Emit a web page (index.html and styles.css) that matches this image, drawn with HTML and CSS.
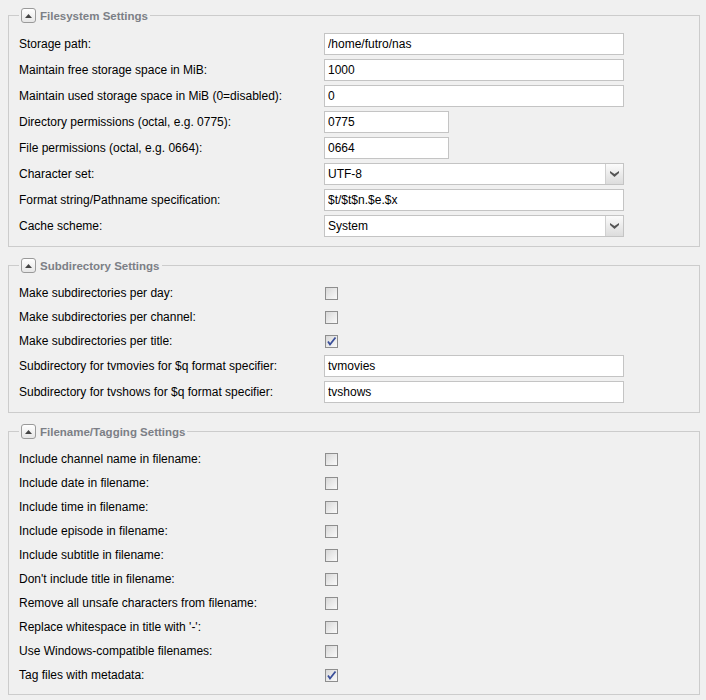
FILE: index.html
```html
<!DOCTYPE html>
<html lang="en">

<head>
  <meta charset="UTF-8">
  <meta name="viewport" content="width=device-width, initial-scale=1.0">
  <title>Recording settings</title>
  <link rel="stylesheet" href="styles.css">
</head>

<body>
  <fieldset class="group">
    <legend><span class="toggle"><svg width="7" height="4" viewBox="0 0 7 4"><path d="M0 4 L3.5 0 L7 4 Z" fill="#444"/></svg></span>Filesystem Settings</legend>
    <div class="row"><label>Storage path:</label><input class="text wide" value="/home/futro/nas"></div>
    <div class="row"><label>Maintain free storage space in MiB:</label><input class="text wide" value="1000"></div>
    <div class="row"><label>Maintain used storage space in MiB (0=disabled):</label><input class="text wide" value="0"></div>
    <div class="row"><label>Directory permissions (octal, e.g. 0775):</label><input class="text short" value="0775"></div>
    <div class="row"><label>File permissions (octal, e.g. 0664):</label><input class="text short" value="0664"></div>
    <div class="row"><label>Character set:</label>
      <div class="combo"><span class="value">UTF-8</span><span class="trigger"><svg width="9" height="6" viewBox="0 0 9 6"><path d="M0 0 L4.5 3 L9 0 L9 2 L4.5 6 L0 2 Z" fill="#555"/></svg></span></div>
    </div>
    <div class="row"><label>Format string/Pathname specification:</label><input class="text wide" value="$t/$t$n.$e.$x"></div>
    <div class="row"><label>Cache scheme:</label>
      <div class="combo"><span class="value">System</span><span class="trigger"><svg width="9" height="6" viewBox="0 0 9 6"><path d="M0 0 L4.5 3 L9 0 L9 2 L4.5 6 L0 2 Z" fill="#555"/></svg></span></div>
    </div>
  </fieldset>

  <fieldset class="group">
    <legend><span class="toggle"><svg width="7" height="4" viewBox="0 0 7 4"><path d="M0 4 L3.5 0 L7 4 Z" fill="#444"/></svg></span>Subdirectory Settings</legend>
    <div class="row check-row"><label>Make subdirectories per day:</label><span class="check"></span></div>
    <div class="row check-row"><label>Make subdirectories per channel:</label><span class="check"></span></div>
    <div class="row check-row"><label>Make subdirectories per title:</label><span class="check checked"><svg width="11" height="11" viewBox="0 0 11 11"><path d="M2 5.5 L4 8.5 L9.5 1.5" fill="none" stroke="#3a4f9a" stroke-width="1.8"/></svg></span></div>
    <div class="row"><label>Subdirectory for tvmovies for $q format specifier:</label><input class="text wide" value="tvmovies"></div>
    <div class="row"><label>Subdirectory for tvshows for $q format specifier:</label><input class="text wide" value="tvshows"></div>
  </fieldset>

  <fieldset class="group">
    <legend><span class="toggle"><svg width="7" height="4" viewBox="0 0 7 4"><path d="M0 4 L3.5 0 L7 4 Z" fill="#444"/></svg></span>Filename/Tagging Settings</legend>
    <div class="row check-row"><label>Include channel name in filename:</label><span class="check"></span></div>
    <div class="row check-row"><label>Include date in filename:</label><span class="check"></span></div>
    <div class="row check-row"><label>Include time in filename:</label><span class="check"></span></div>
    <div class="row check-row"><label>Include episode in filename:</label><span class="check"></span></div>
    <div class="row check-row"><label>Include subtitle in filename:</label><span class="check"></span></div>
    <div class="row check-row"><label>Don't include title in filename:</label><span class="check"></span></div>
    <div class="row check-row"><label>Remove all unsafe characters from filename:</label><span class="check"></span></div>
    <div class="row check-row"><label>Replace whitespace in title with '-':</label><span class="check"></span></div>
    <div class="row check-row"><label>Use Windows-compatible filenames:</label><span class="check"></span></div>
    <div class="row check-row"><label>Tag files with metadata:</label><span class="check checked"><svg width="11" height="11" viewBox="0 0 11 11"><path d="M2 5.5 L4 8.5 L9.5 1.5" fill="none" stroke="#3a4f9a" stroke-width="1.8"/></svg></span></div>
  </fieldset>
</body>

</html>
```

FILE: styles.css
```css
body {
  font-family: "Liberation Sans", Arial, sans-serif;
  font-size: 12px;
  color: #000;
  background-color: #f0f0f0;
  margin: 0;
  padding: 8px 6px 0 8px;
}

.group {
  border: 1px solid #cccccc;
  margin: 0 0 11px;
  padding: 8px 10px 7px;
  min-width: 0;
}

.group legend {
  display: flex;
  align-items: center;
  height: 15px;
  padding: 0 2px 0 2px;
  font-weight: bold;
  font-size: 11.5px;
  color: #7c7f86;
}

.toggle {
  display: inline-flex;
  align-items: center;
  justify-content: center;
  width: 13px;
  height: 13px;
  border: 1px solid #9a9a9a;
  border-radius: 3px;
  background: linear-gradient(#ffffff, #e6e6e6);
  margin-right: 4px;
}

.row {
  display: flex;
  align-items: center;
  height: 26px;
}

.check-row {
  height: 24px;
}

.row label {
  width: 305px;
  flex: none;
}

.text {
  box-sizing: border-box;
  height: 22px;
  border: 1px solid #c4c4c4;
  background: #fff;
  font-family: inherit;
  font-size: 12px;
  padding: 0 3px;
  margin: 0;
  color: #000;
}

.wide {
  width: 300px;
}

.short {
  width: 125px;
}

.combo {
  box-sizing: border-box;
  display: flex;
  width: 300px;
  height: 22px;
  border: 1px solid #c4c4c4;
  background: #fff;
}

.combo .value {
  flex: 1;
  padding: 0 3px;
  line-height: 20px;
}

.trigger {
  display: flex;
  align-items: center;
  justify-content: center;
  width: 17px;
  border-left: 1px solid #d0d0d0;
  background: linear-gradient(#fbfbfb, #dcdcdc);
}

.check {
  box-sizing: border-box;
  display: flex;
  align-items: center;
  justify-content: center;
  width: 13px;
  height: 13px;
  margin-left: 1px;
  border: 1px solid #8e8e8e;
  background: linear-gradient(135deg, #d8d8d8, #fafafa);
}
```
